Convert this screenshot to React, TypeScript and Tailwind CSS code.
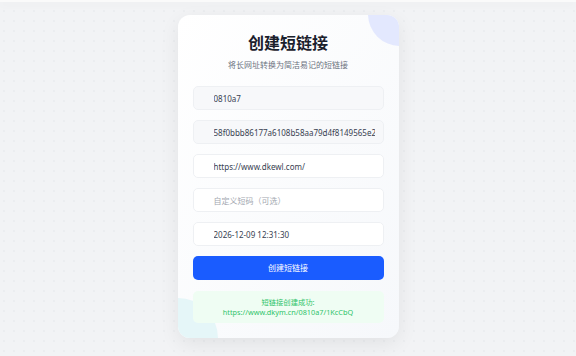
import { useState } from "react";

/**
 * Short-link creator card: code / token / target url / custom code / expiry,
 * a submit button and the success notice underneath.
 */

const FONT = "font-['Noto_Sans','Noto_Sans_CJK_SC',sans-serif]";

function Field({
  value,
  placeholder,
  muted,
}: {
  value?: string;
  placeholder?: string;
  muted?: boolean;
}) {
  const [v, setV] = useState(value ?? "");
  return (
    <input
      value={v}
      onChange={(e) => setV(e.target.value)}
      placeholder={placeholder}
      readOnly={muted}
      className={`block h-6 w-full rounded-[5px] border border-[#eef0f3] pl-5 pr-2 text-[8px] text-[#374151] outline-none placeholder:text-[#a3a8b0] ${
        muted ? "bg-[#f7f8fa]" : "bg-white"
      }`}
    />
  );
}

export default function App() {
  return (
    <div
      className={`${FONT} relative min-h-[356px] w-full bg-[#f2f3f5] bg-[radial-gradient(circle,#e3e5e9_0.6px,transparent_0.8px)] bg-[length:10px_10px] bg-[position:-1px_6px]`}
    >
      <div className="h-[2px] w-full bg-[#fafafa] shadow-[0_2px_8px_rgba(0,0,0,0.06)]" />
      <div className="flex justify-center pt-[13px]">
        <div className="relative w-[221px] overflow-hidden rounded-[12px] bg-gradient-to-br from-white to-[#f6f8fb] px-[15px] pt-4 pb-[15px] shadow-[0_6px_20px_rgba(0,0,0,0.07)]">
          <div className="absolute -top-[33px] -right-[33px] h-16 w-16 rounded-full bg-[#e3e8fe]" />
          <div className="absolute -bottom-[40px] -left-[40px] h-20 w-20 rounded-full bg-[#e5f6f8]" />

          <div className="relative">
            <h1 className="text-center text-[16px] leading-6 font-bold text-[#1a202c]">
              创建短链接
            </h1>
            <p className="mt-[3px] text-center text-[8px] leading-[14px] text-[#6b7280]">
              将长网址转换为简洁易记的短链接
            </p>

            <div className="mt-[14px] flex flex-col gap-[10px]">
              <Field value="0810a7" muted />
              <Field value="58f0bbb86177a6108b58aa79d4f8149565e2c1" muted />
              <Field value="https://www.dkewl.com/" />
              <Field placeholder="自定义短码（可选）" />
              <Field value="2026-12-09 12:31:30" />
              <button className="h-6 w-full rounded-[5px] bg-[#1a5cff] text-[8px] text-white">
                创建短链接
              </button>
            </div>

            <div className="mt-[11px] flex h-8 flex-col items-center justify-center rounded-[5px] bg-[#effdf3] text-[7.3px] leading-[10px] text-[#2fc46a]">
              <span>短链接创建成功:</span>
              <span>https://www.dkym.cn/0810a7/1KcCbQ</span>
            </div>
          </div>
        </div>
      </div>
    </div>
  );
}
